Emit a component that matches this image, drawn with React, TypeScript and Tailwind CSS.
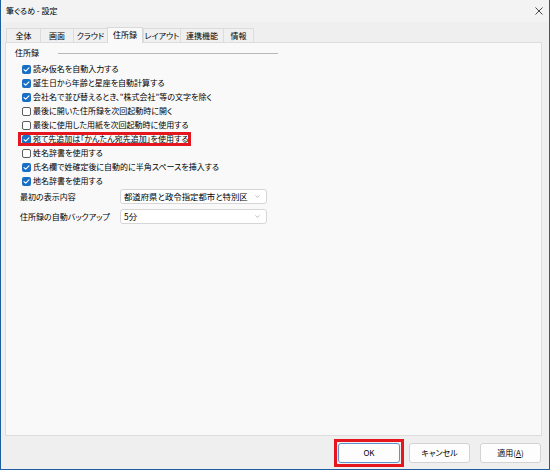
import { ChevronDown } from "lucide-react";

const tabs = [
  { label: "全体", w: "w-[34px]" },
  { label: "画面", w: "w-[33px]" },
  { label: "クラウド", w: "w-[34px]" },
  { label: "住所録", w: "w-[36px]", active: true },
  { label: "レイアウト", w: "w-[37px]" },
  { label: "連携機能", w: "w-[43px]" },
  { label: "情報", w: "w-[31px]" },
];

const options = [
  { label: "読み仮名を自動入力する", checked: true },
  { label: "誕生日から年齢と星座を自動計算する", checked: true },
  { label: "会社名で並び替えるとき、\"株式会社\"等の文字を除く", checked: true },
  { label: "最後に開いた住所録を次回起動時に開く", checked: false },
  { label: "最後に使用した用紙を次回起動時に使用する", checked: false },
  { label: "宛て先追加は「かんたん宛先追加」を使用する", checked: true, marked: true },
  { label: "姓名辞書を使用する", checked: false },
  { label: "氏名欄で姓確定後に自動的に半角スペースを挿入する", checked: true },
  { label: "地名辞書を使用する", checked: true },
];

function Checkbox({ checked }: { checked: boolean }) {
  if (!checked) {
    return <span className="w-[9px] h-[9px] shrink-0 rounded-[2px] border border-[#5c5c5c] bg-white" />;
  }
  return (
    <span className="w-[9px] h-[9px] shrink-0 rounded-[2px] bg-[#1a6fc4] flex items-center justify-center">
      <svg width="9" height="9" viewBox="0 0 9 9" fill="none">
        <path d="M2 4.6 L3.7 6.2 L7 2.9" stroke="white" strokeWidth="1.1" strokeLinecap="round" strokeLinejoin="round" />
      </svg>
    </span>
  );
}

function Select({ value }: { value: string }) {
  return (
    <div className="w-[147px] h-[15px] bg-white border border-[#d6d6d6] rounded-[3px] flex items-center justify-between pl-[3px] pr-[5px]">
      <span className="text-[8.4px]">{value}</span>
      <ChevronDown className="w-[7px] h-[7px] text-[#6b6b6b]" strokeWidth={1.5} />
    </div>
  );
}

export default function App() {
  return (
    <div className="w-[550px] h-[470px] flex flex-col bg-[#efefef] border-l border-r border-b border-[#1f5f9f] text-[8px] leading-none text-black font-['Noto_Sans_CJK_JP',sans-serif] [font-feature-settings:'palt']">
      {/* title bar */}
      <div className="h-[22px] shrink-0 bg-[#f3f3f3] flex items-center justify-between pl-[5px] pr-[6px]">
        <span>筆ぐるめ - 設定</span>
        <svg width="8" height="8" viewBox="0 0 8 8" fill="none">
          <path d="M0.5 0.5 L7.5 7.5 M7.5 0.5 L0.5 7.5" stroke="#333" strokeWidth="0.9" />
        </svg>
      </div>

      {/* tabs */}
      <div className="flex items-end ml-[5px] mt-[5px]">
        {tabs.map((t, i) =>
          t.active ? (
            <div
              key={t.label}
              className={`${t.w} h-[16px] -mb-px relative z-10 bg-[#f9f9f9] border-x border-t border-[#d9d9d9] flex items-center justify-center pb-[2px]`}
            >
              {t.label}
            </div>
          ) : (
            <div
              key={t.label}
              className={`${t.w} h-[14px] bg-[#f0f0f0] border-t border-l border-[#dcdcdc] flex items-center justify-center ${i === tabs.length - 1 ? "border-r" : ""}`}
            >
              {t.label}
            </div>
          )
        )}
      </div>

      {/* panel */}
      <div className="w-[537px] h-[394px] ml-[4px] bg-[#f9f9f9] border border-[#dddddd] pt-[3px] pl-[9px]">
        <div className="h-[14px] flex items-center">
          <span className="w-[43px]">住所録</span>
          <span className="w-[220px] h-px bg-[#b8b8b8]" />
        </div>

        <div className="mt-[2px] pl-[7px] flex flex-col">
          {options.map((o) => (
            <div key={o.label} className="relative h-[14px] w-fit flex items-center gap-[2px]">
              <Checkbox checked={o.checked} />
              <span>{o.label}</span>
              {o.marked && <span className="absolute -left-[4px] -right-[3px] top-0 bottom-0 border-[3px] border-[#e4161e]" />}
            </div>
          ))}
        </div>

        <div className="mt-[1px] ml-[5px] h-[15px] flex items-center">
          <span className="w-[100px]">最初の表示内容</span>
          <Select value="都道府県と政令指定都市と特別区" />
        </div>
        <div className="mt-[5px] ml-[5px] h-[15px] flex items-center">
          <span className="w-[100px]">住所録の自動バックアップ</span>
          <Select value="5分" />
        </div>
      </div>

      {/* buttons */}
      <div className="flex justify-end items-center pt-[3px] pr-[8px]">
        <div className="border-[3px] border-[#e4161e] p-px">
          <button className="w-[62px] h-[20px] bg-[#fdfdfd] border border-[#5f92cf] rounded-[3px]">OK</button>
        </div>
        <button className="ml-[5px] w-[61px] h-[20px] bg-[#fdfdfd] border border-[#d3d3d3] rounded-[3px]">キャンセル</button>
        <button className="ml-[10px] w-[61px] h-[20px] bg-[#fdfdfd] border border-[#d3d3d3] rounded-[3px]">
          適用(<span className="underline">A</span>)
        </button>
      </div>
    </div>
  );
}
